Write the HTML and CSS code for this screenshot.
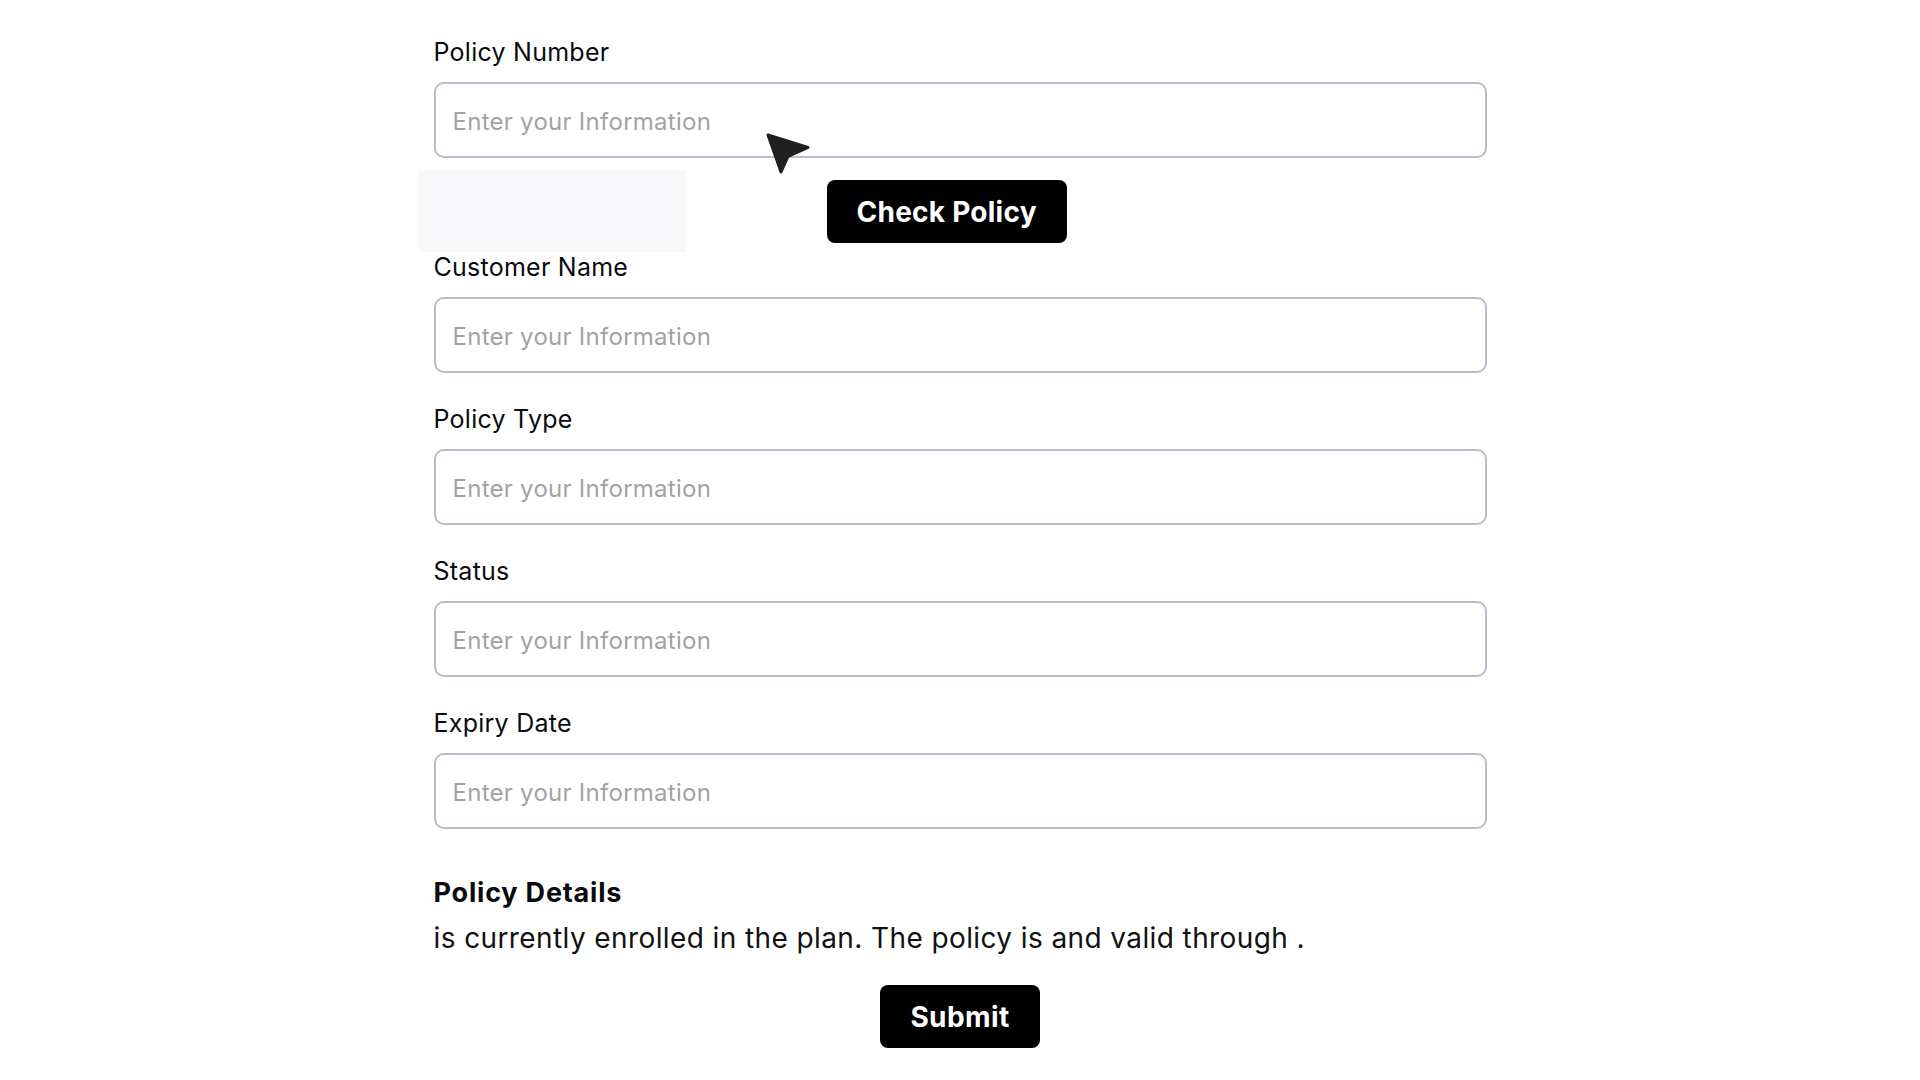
FILE: index.html
```html
<!DOCTYPE html>
<html lang="en">
<head>
    <meta charset="UTF-8">
    <meta name="viewport" content="width=device-width, initial-scale=1.0">
    <title>Policy Check</title>
    <link rel="stylesheet" href="styles.css">
</head>
<body>

    <div class="form">
        <div class="form-group first">
            <label for="policy-number">Policy Number</label>
            <input type="text" id="policy-number" placeholder="Enter your Information">
        </div>

        <div class="check-row">
            <div class="preview-box"></div>
            <button type="button" class="btn check-btn">Check Policy</button>
        </div>

        <div class="form-group tight">
            <label for="customer-name">Customer Name</label>
            <input type="text" id="customer-name" placeholder="Enter your Information">
        </div>

        <div class="form-group">
            <label for="policy-type">Policy Type</label>
            <input type="text" id="policy-type" placeholder="Enter your Information">
        </div>

        <div class="form-group">
            <label for="status">Status</label>
            <input type="text" id="status" placeholder="Enter your Information">
        </div>

        <div class="form-group">
            <label for="expiry-date">Expiry Date</label>
            <input type="text" id="expiry-date" placeholder="Enter your Information">
        </div>

        <div class="details">
            <div class="details-title">Policy Details</div>
            <p class="details-text">is currently enrolled in the plan. The policy is and valid through .</p>
        </div>

        <div class="submit-row">
            <button type="submit" class="btn">Submit</button>
        </div>

        <!-- курсор поверх поля -->
        <svg class="cursor" width="46" height="43" viewBox="0 0 46 43">
            <polygon points="3,3 43,15.5 23,24.5 16,40" fill="#1f1f1f" stroke="#1f1f1f" stroke-width="3" stroke-linejoin="round"/>
        </svg>
    </div>

</body>
</html>
```

FILE: styles.css
```css
body {
    font-family: 'Inter', 'Liberation Sans', sans-serif;
    margin: 0;
    padding: 0;
    background-color: #ffffff;
    color: #0b0b0f;
}

.form {
    width: 1053px;
    margin: 0 auto;
    padding-top: 37px;
    position: relative;
}

.form-group {
    margin-top: 31px;
}

.form-group.first,
.form-group.tight {
    margin-top: 0;
}

label {
    display: block;
    font-size: 25px;
    line-height: 30px;
    letter-spacing: 0.25px;
    margin-bottom: 15px;
    color: #0b0b0f;
}

input {
    display: block;
    width: 100%;
    height: 76px;
    box-sizing: border-box;
    padding: 2px 17px 0;
    border: 2px solid #b8bdcc;
    border-radius: 10px;
    font-family: inherit;
    font-size: 24px;
    letter-spacing: 0.27px;
    color: #111;
    background: #fff;
    outline: none;
}

input::placeholder {
    color: #a3a3a3;
}

.check-row {
    display: flex;
    align-items: center;
    margin-top: 13px;
    margin-left: -15px;
}

.preview-box {
    width: 267px;
    height: 81px;
    background-color: #f8f8fa;
}

.btn {
    height: 63px;
    padding: 0 30px;
    background-color: #000;
    color: #fff;
    border: none;
    border-radius: 8px;
    font-family: inherit;
    font-size: 28px;
    letter-spacing: 0.4px;
    font-weight: bold;
    cursor: pointer;
}

.check-btn {
    margin-left: 141px;
    letter-spacing: 0.25px;
}

.details {
    margin-top: 49px;
}

.details-title {
    font-size: 27px;
    line-height: 30px;
    letter-spacing: 0.8px;
    font-weight: bold;
}

.details-text {
    margin: 13px 0 0;
    font-size: 28px;
    line-height: 34px;
    letter-spacing: 0.4px;
    color: #111;
}

.submit-row {
    display: flex;
    justify-content: center;
    margin-top: 30px;
}

.cursor {
    position: absolute;
    left: 331px;
    top: 132px;
}
```
